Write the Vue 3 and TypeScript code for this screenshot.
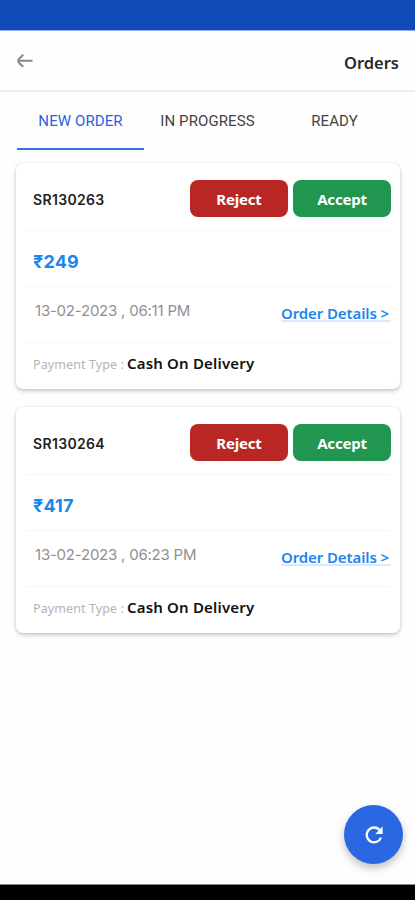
<script setup lang="ts">
import { ref } from 'vue'

interface Order {
  id: string
  amount: string
  placedAt: string
  payment: string
}

const tabs: string[] = ['NEW ORDER', 'IN PROGRESS', 'READY']
const activeTab = ref<number>(0)

const orders: Order[] = [
  { id: 'SR130263', amount: '₹249', placedAt: '13-02-2023 , 06:11 PM', payment: 'Cash On Delivery' },
  { id: 'SR130264', amount: '₹417', placedAt: '13-02-2023 , 06:23 PM', payment: 'Cash On Delivery' },
]
</script>

<template>
  <div class="screen">
    <div class="status-bar"></div>
    <header class="app-bar">
      <button class="back" aria-label="Back">
        <svg width="16" height="14" viewBox="0 0 16 14" fill="none" stroke="#858585" stroke-width="2" stroke-linejoin="round">
          <path d="M6.3 .8 2.6 4.2Q0 7 2.6 9.4L6.3 12.8M2.5 6.8H15.5" />
        </svg>
      </button>
      <h1 class="title">Orders</h1>
    </header>

    <nav class="tabs">
      <button
        v-for="(tab, i) in tabs"
        :key="tab"
        class="tab"
        :class="{ active: activeTab === i }"
        @click="activeTab = i"
      >{{ tab }}</button>
    </nav>

    <main class="orders">
      <article v-for="order in orders" :key="order.id" class="card">
        <div class="row head">
          <span class="order-id">{{ order.id }}</span>
          <div class="actions">
            <button class="action reject">Reject</button>
            <button class="action accept">Accept</button>
          </div>
        </div>
        <div class="row price">{{ order.amount }}</div>
        <div class="row info">
          <span class="date">{{ order.placedAt }}</span>
          <a class="details">Order Details &gt;</a>
        </div>
        <div class="row payment">
          <span class="label">Payment Type :</span>
          <span class="method">{{ order.payment }}</span>
        </div>
      </article>
    </main>

    <button class="refresh" aria-label="Refresh">
      <svg width="20" height="20" viewBox="0 0 20 20" fill="none" stroke="#fff" stroke-width="2.3">
        <path d="M16 5.4A7.4 7.4 0 1 0 17 12.6" />
        <path d="M18.6 1.6V8.9H11.3Z" fill="#fff" stroke="none" />
      </svg>
    </button>
    <div class="nav-bar"></div>
  </div>
</template>

<style>
body {
  margin: 0;
  background: #fefefe;
}
</style>

<style scoped>
.screen {
  position: relative;
  display: flex;
  flex-direction: column;
  width: 415px;
  height: 900px;
  overflow: hidden;
  background: #fefefe;
  font-family: "Noto Sans", "Open Sans", sans-serif;
}

button {
  padding: 0;
  border: 0;
  background: none;
  font: inherit;
}

.status-bar {
  flex: none;
  height: 31px;
  box-sizing: border-box;
  background: #114bb8;
  border-bottom: 1px solid #94a9ea;
}

.app-bar {
  flex: none;
  display: flex;
  justify-content: space-between;
  height: 59px;
  padding: 0 16px 0 17px;
  border-bottom: 2px solid #efefef;
}

.back {
  display: flex;
  height: 14px;
  margin-top: 23px;
}

.title {
  margin: 20px 0 0;
  font-size: 16.5px;
  line-height: 24px;
  font-weight: 600;
  color: #292929;
}

.tabs {
  flex: none;
  display: flex;
  height: 58px;
  padding: 0 17px;
}

.tab {
  width: 127px;
  padding-top: 1px;
  border-bottom: 2px solid transparent;
  font-family: Roboto, sans-serif;
  font-size: 15px;
  letter-spacing: 0.1px;
  color: #444;
}

.tab.active {
  border-color: #3470df;
  color: #2b62e3;
}

.orders {
  display: flex;
  flex-direction: column;
  gap: 18px;
  padding: 13px 15px 0 16px;
}

.card {
  display: flex;
  flex-direction: column;
  height: 226px;
  padding: 0 9px;
  box-sizing: border-box;
  border-radius: 7px;
  background: #fff;
  box-shadow: 0 2px 4px rgba(0, 0, 0, 0.22), 0 0 2px rgba(0, 0, 0, 0.07);
}

.row {
  display: flex;
  align-items: center;
  box-sizing: border-box;
  height: 56px;
  padding-left: 8px;
  border-bottom: 1px solid #f6f6f6;
  white-space: nowrap;
}

.head {
  height: 68px;
  justify-content: space-between;
}

.order-id {
  padding-top: 6px;
  font-family: Inter, sans-serif;
  font-size: 14px;
  font-weight: 600;
  letter-spacing: 0.33px;
  color: #222;
}

.actions {
  display: flex;
  gap: 5px;
  padding-top: 3px;
}

.action {
  width: 98px;
  height: 37px;
  padding-top: 2px;
  border-radius: 8px;
  font-size: 15px;
  font-weight: 700;
  letter-spacing: -0.2px;
  color: #fff;
}

.reject {
  background: #b82724;
}

.accept {
  background: #209650;
}

.price {
  padding-top: 5px;
  font-family: Inter, "Noto Sans", sans-serif;
  font-size: 18px;
  font-weight: 700;
  letter-spacing: 0.15px;
  color: #1b87ec;
}

.info {
  justify-content: space-between;
  align-items: flex-start;
}

.date {
  padding: 13px 0 0 2px;
  font-family: Inter, sans-serif;
  font-size: 15px;
  line-height: 21px;
  letter-spacing: -0.22px;
  color: #909094;
}

.details {
  height: 17px;
  margin-top: 16px;
  padding-right: 2px;
  border-bottom: 2px solid #dce9fc;
  font-size: 15px;
  line-height: 20px;
  font-weight: 600;
  letter-spacing: -0.1px;
  color: #1b87ec;
}

.payment {
  height: 46px;
  padding-top: 10px;
  padding-bottom: 4px;
  border-bottom: 0;
  align-items: baseline;
}

.label {
  width: 94px;
  font-size: 12.5px;
  letter-spacing: 0.1px;
  color: #b4b4b4;
}

.method {
  font-size: 15px;
  font-weight: 600;
  letter-spacing: 0.18px;
  color: #111;
}

.refresh {
  position: absolute;
  right: 12px;
  bottom: 36px;
  display: flex;
  align-items: center;
  justify-content: center;
  width: 59px;
  height: 59px;
  border-radius: 50%;
  background: #2968e2;
  box-shadow: 0 4px 9px rgba(0, 0, 0, 0.25);
}

.nav-bar {
  flex: none;
  height: 16px;
  margin-top: auto;
  box-sizing: border-box;
  border-top: 1px solid #888;
  background: #000;
}
</style>
